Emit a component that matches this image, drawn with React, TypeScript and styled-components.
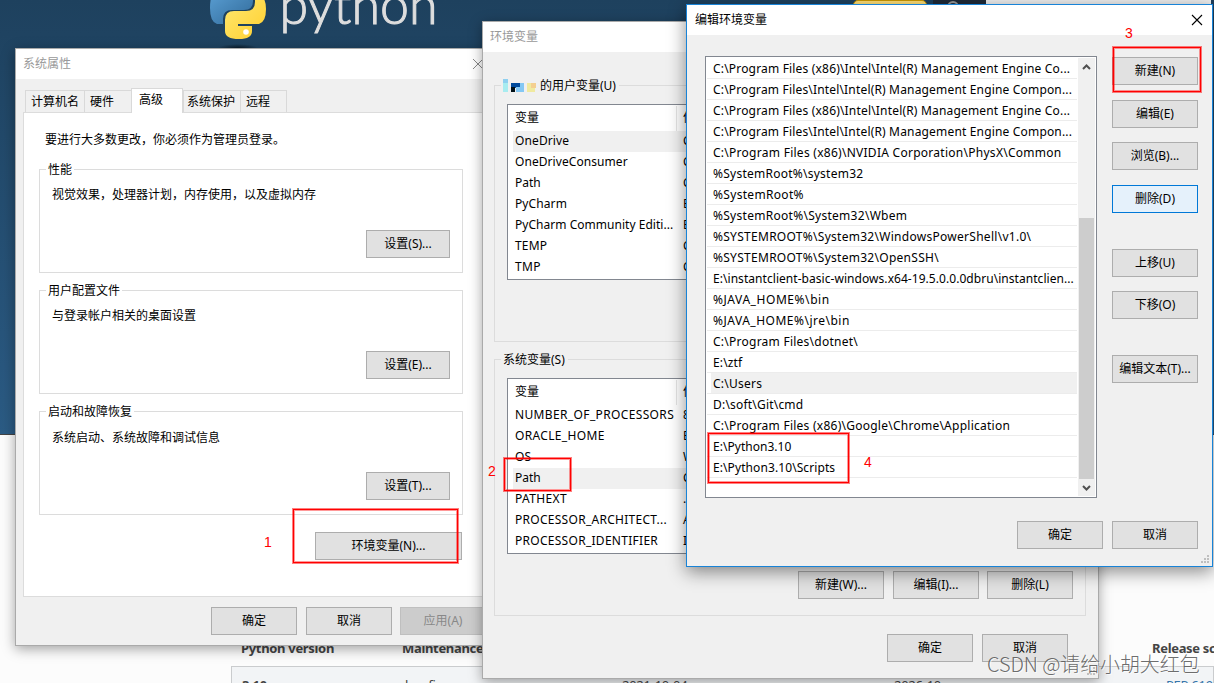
import React from "react";
import styled, { createGlobalStyle, css } from "styled-components";

const Global = createGlobalStyle`
  * { box-sizing: border-box; }
  body { margin: 0; overflow: hidden; }
`;

const ui = `"Noto Sans", "Noto Sans CJK SC", sans-serif`;

const Desktop = styled.main`
  position: relative;
  width: 1214px;
  height: 683px;
  overflow: hidden;
  background: #fcfcfc;
  font: 12px/16px ${ui};
  color: #000;
`;

/* Web page behind the dialogs */
const Banner = styled.header`
  height: 435px;
  padding-left: 200px;
  display: flex;
  align-items: flex-start;
  background: linear-gradient(#1e415e, #2b5b84);
  border-bottom: 1px solid #444;
`;
const NavStrip = styled.div`
  display: flex;
  width: 358px;
  height: 14px;
  margin-left: 403px;
`;
const Donate = styled.div`
  width: 74px;
  height: 14px;
  margin-right: 6px;
  border: 1px solid #c99700;
  border-radius: 5px;
  background: #ffdf76;
`;
const SearchIcon = styled.div`
  width: 53px;
  height: 14px;
  padding: 1px 0 0 14px;
  background: #1f2a38;
`;
const SearchField = styled.div`
  flex: 1;
  background: #eee;
`;
const Releases = styled.section`
  margin: 204px 0 0 231px;
`;
const ReleaseHead = styled.div`
  display: grid;
  grid-template-columns: 161px 220px 272px 258px 100px;
  height: 27px;
  padding-left: 10px;
  font: bold 13px/18px "Noto Sans", sans-serif;
  letter-spacing: -0.32px;
  color: #444;
  white-space: nowrap;
`;
const ReleaseRow = styled.div`
  display: grid;
  grid-template-columns: 163px 217px 272px 272px 100px;
  height: 40px;
  padding: 9px 0 0 10px;
  border: 1px solid #caccce;
  background: #f2f4f6;
  font: 13px/18px "Noto Sans", sans-serif;
  letter-spacing: -0.25px;
  color: #444;
  white-space: nowrap;
`;
const Version = styled.b``;
const PepLink = styled.span`
  color: #3776ab;
`;

/* Dialog chrome */
const Dialog = styled.section<{ $x: number; $y: number; $w: number; $h: number; $active?: boolean }>`
  position: absolute;
  left: ${(p) => p.$x}px;
  top: ${(p) => p.$y}px;
  width: ${(p) => p.$w}px;
  height: ${(p) => p.$h}px;
  display: flex;
  flex-direction: column;
  background: #f0f0f0;
  border: 1px solid ${(p) => (p.$active ? "#1883d7" : "#aaa")};
  box-shadow: ${(p) => (p.$active ? "0 5px 17px rgba(0,0,0,.45)" : "0 3px 12px rgba(0,0,0,.36)")};
`;
const TitleBar = styled.header<{ $active?: boolean }>`
  display: flex;
  justify-content: space-between;
  align-items: center;
  flex: none;
  height: 30px;
  padding: 0 9px 0 ${(p) => (p.$active ? 8 : 7)}px;
  background: #fff;
  color: ${(p) => (p.$active ? "#000" : "#999")};
`;
const Button = styled.button<{ $w?: number; $focus?: boolean; $gap?: number; $snug?: boolean }>`
  flex: none;
  width: ${(p) => p.$w ?? 86}px;
  height: 28px;
  margin: ${(p) => p.$gap ?? 0}px 0 0 ${(p) => (p.$snug ? -1 : 0)}px;
  padding: 0;
  border: 1px solid ${(p) => (p.$focus ? "#0078d7" : "#adadad")};
  background: ${(p) => (p.$focus ? "#e5f1fb" : "#e1e1e1")};
  color: #000;
  font: 12px/16px ${ui};
  &:disabled {
    border-color: #bfbfbf;
    background: #ccc;
    color: #888;
  }
`;
const Group = styled.fieldset`
  position: relative;
  margin: 0;
  padding: 0;
  min-width: 0;
  border: 1px solid #dcdcdc;
`;
const groupLabel = css`
  display: flex;
  align-items: center;
  width: max-content;
  height: 16px;
  white-space: nowrap;
`;

/* System properties */
const Tabs = styled.nav`
  display: flex;
  align-items: flex-end;
  flex: none;
  height: 33px;
  padding-left: 9px;
`;
const Tab = styled.div<{ $w: number; $on?: boolean; $inset?: number }>`
  position: relative;
  width: ${(p) => p.$w}px;
  height: ${(p) => (p.$on ? 25 : 22)}px;
  padding: 3px 0 0 ${(p) => p.$inset ?? 5}px;
  border: 1px solid #d9d9d9;
  border-bottom: 0;
  border-right-width: ${(p) => (p.$on ? 1 : 0)}px;
  background: ${(p) => (p.$on ? "#fff" : "#f0f0f0")};
  margin-bottom: ${(p) => (p.$on ? -1 : 0)}px;
  white-space: nowrap;
  &:last-child { border-right-width: 1px; }
`;
const TabPage = styled.div`
  display: flex;
  flex-direction: column;
  flex: none;
  width: 480px;
  height: 485px;
  margin-left: 7px;
  padding: 19px 0 0 15px;
  border: 1px solid #dcdcdc;
  background: #fff;
`;
const Hint = styled.p`
  margin: 0 0 13px 6px;
`;
const SettingGroup = styled(Group)`
  display: flex;
  flex-direction: column;
  width: 424px;
  height: 112px;
  margin-bottom: 9px;
  flex: none;
`;
const SettingLegend = styled.legend`
  ${groupLabel}
  margin-left: 6px;
  padding: 2px 2px 0;
`;
const SettingText = styled.p<{ $low?: boolean }>`
  margin: ${(p) => (p.$low ? "11px 0 26px 12px" : "10px 0 27px 12px")};
`;
const SettingAction = styled.div`
  display: flex;
  justify-content: flex-end;
  padding-right: 12px;
`;
const EnvAction = styled.div`
  display: flex;
  width: 423px;
  justify-content: flex-end;
  margin-top: 8px;
`;
const Footer = styled.footer<{ $top: number; $right: number }>`
  display: flex;
  justify-content: flex-end;
  gap: 9px;
  margin-top: ${(p) => p.$top}px;
  padding-right: ${(p) => p.$right}px;
`;

/* Environment variables */
const VarBody = styled.div`
  padding: 25px 0 0 11px;
`;
const VarGroup = styled(Group)`
  width: 592px;
  height: 265px;
  margin-bottom: 9px;
  padding: 11px 12px 0;
`;
const VarLegend = styled.legend`
  ${groupLabel}
  margin-left: -6px;
  padding: 2px 3px 0 2px;
`;
const VarTable = styled.div`
  width: 567px;
  height: 176px;
  padding: 1px 0 0 5px;
  border: 1px solid #828790;
  background: #fff;
`;
const VarHeader = styled.div`
  display: grid;
  grid-template-columns: 164px 1fr;
  height: 25px;
  line-height: 24px;
`;
const VarHeaderCell = styled.span<{ $last?: boolean }>`
  padding-left: ${(p) => (p.$last ? 6 : 2)}px;
  border-right: ${(p) => (p.$last ? 0 : 1)}px solid #e5e5e5;
`;
const VarRow = styled.div<{ $on?: boolean }>`
  display: grid;
  grid-template-columns: 168px 1fr;
  height: 21px;
  padding-left: 2px;
  line-height: 20px;
  background: ${(p) => (p.$on ? "#f0f0f0" : "#fff")};
  white-space: nowrap;
`;
const VarName = styled.span<{ $track?: number }>`
  letter-spacing: ${(p) => p.$track ?? 0.2}px;
`;
const VarActions = styled.div`
  display: flex;
  justify-content: flex-end;
  gap: 9px;
  margin-top: 17px;
`;

/* Edit dialog */
const EditBody = styled.div`
  display: flex;
  justify-content: space-between;
  padding: 21px 14px 0 18px;
`;
const PathList = styled.div`
  display: flex;
  width: 392px;
  height: 442px;
  padding: 1px;
  border: 1px solid #828790;
  background: #fff;
`;
const PathRows = styled.div`
  flex: 1;
  min-width: 0;
`;
const PathRow = styled.div<{ $on?: boolean; $track?: number }>`
  height: 21px;
  margin-right: 1px;
  padding-left: 6px;
  border-bottom: 1px solid #ececec;
  background: ${(p) => (p.$on ? "linear-gradient(90deg,#fff 4px,#f0f0f0 4px)" : "#fff")};
  line-height: 22px;
  letter-spacing: ${(p) => p.$track ?? 0.25}px;
  white-space: nowrap;
`;
const Scrollbar = styled.div`
  display: flex;
  flex-direction: column;
  justify-content: space-between;
  align-items: center;
  width: 17px;
  background: #f0f0f0;
`;
const ScrollThumb = styled.div`
  width: 15px;
  height: 261px;
  margin-top: 143px;
  background: #cdcdcd;
`;
const Commands = styled.div`
  display: flex;
  flex-direction: column;
  width: 86px;
  padding-top: 1px;
`;
const Grip = styled.svg`
  position: absolute;
  right: 2px;
  bottom: 2px;
`;

/* Annotations laid over the windows */
const Mark = styled.div<{ $x: number; $y: number; $w: number; $h: number }>`
  position: absolute;
  left: ${(p) => p.$x}px;
  top: ${(p) => p.$y}px;
  width: ${(p) => p.$w}px;
  height: ${(p) => p.$h}px;
  border: 1px solid #f00;
  outline: 1px solid rgba(255, 0, 0, 0.5);
  box-shadow: inset 0 0 0 1px rgba(255, 0, 0, 0.4);
`;
const Step = styled.span<{ $x: number; $y: number }>`
  position: absolute;
  left: ${(p) => p.$x}px;
  top: ${(p) => p.$y}px;
  font: 14px/16px "Liberation Sans", sans-serif;
  color: #f00;
`;
const Watermark = styled.div`
  position: absolute;
  left: 987px;
  top: 650px;
  font: 300 20px/28px "Noto Sans CJK SC", sans-serif;
  letter-spacing: -0.1px;
  color: rgba(90, 90, 90, 0.9);
  text-shadow: 1px 1px 0 rgba(255, 255, 255, 0.7);
  white-space: nowrap;
`;

const Close = ({ color }: { color: string }) => (
  <svg width="12" height="12" viewBox="0 0 12 12" stroke={color} strokeWidth="1.1">
    <path d="M1 1 11 11M11 1 1 11" />
  </svg>
);

const Dots = () => (
  <Grip width="9" height="9" fill="#bfbfbf">
    <path d="M6 0h2v2h-2zM3 3h2v2h-2zM6 3h2v2h-2zM0 6h2v2h-2zM3 6h2v2h-2zM6 6h2v2h-2z" />
  </Grip>
);

const Logo = () => (
  <svg width="250" height="48" viewBox="200 0 250 48">
    <defs>
      <linearGradient id="blue" x1="0" y1="0" x2="1" y2="1">
        <stop offset="0" stopColor="#5a9fd4" />
        <stop offset="1" stopColor="#306998" />
      </linearGradient>
      <linearGradient id="gold" x1="0" y1="0" x2="1" y2="1">
        <stop offset="0" stopColor="#ffe873" />
        <stop offset="1" stopColor="#ffd02f" />
      </linearGradient>
      <radialGradient id="shade">
        <stop offset="0" stopColor="#0b1d2c" />
        <stop offset="1" stopColor="#0b1d2c" stopOpacity="0" />
      </radialGradient>
    </defs>
    <ellipse cx="238" cy="48" rx="20" ry="4" fill="url(#shade)" />
    <path d="M214 -8H253V1Q253 10 244 10H232Q223 10 223 19V24H217Q210 22 210 8Q210 -4 214 -8Z" fill="url(#blue)" />
    <path d="M255 -5H259Q266 -3 266 9Q266 22 259 24H238V26H252V31Q252 39 239 39Q225 39 225 31V20Q225 11 234 11H246Q255 11 255 2Z" fill="url(#gold)" />
    <circle cx="246" cy="32" r="2.8" fill="#fff" />
    <text x="279.500" y="23.500" fontFamily="Lato, sans-serif" fontSize="54" fontWeight="300" fill="#dedede" stroke="#dedede" strokeWidth="1.1" textLength="158" lengthAdjust="spacingAndGlyphs">python</text>
  </svg>
);

type Variable = [name: string, value: string, track?: number];
const userVars: Variable[] = [
  ["OneDrive", "C", 0.12],
  ["OneDriveConsumer", "C", 0.07],
  ["Path", "C", 0],
  ["PyCharm", "E", 0.1],
  ["PyCharm Community Editi...", "E", 0.03],
  ["TEMP", "C"],
  ["TMP", "C", 0.4],
];
const systemVars: Variable[] = [
  ["NUMBER_OF_PROCESSORS", "8", 0.36],
  ["ORACLE_HOME", "E", 0.34],
  ["OS", "W"],
  ["Path", "C", 0],
  ["PATHEXT", ".", 0.36],
  ["PROCESSOR_ARCHITECT...", "A", 0.28],
  ["PROCESSOR_IDENTIFIER", "I", 0.28],
];
const paths: [path: string, track?: number][] = [
  ["C:\\Program Files (x86)\\Intel\\Intel(R) Management Engine Co...", 0.18],
  ["C:\\Program Files\\Intel\\Intel(R) Management Engine Compon...", 0.17],
  ["C:\\Program Files (x86)\\Intel\\Intel(R) Management Engine Co...", 0.18],
  ["C:\\Program Files\\Intel\\Intel(R) Management Engine Compon...", 0.17],
  ["C:\\Program Files (x86)\\NVIDIA Corporation\\PhysX\\Common", 0.27],
  ["%SystemRoot%\\system32"],
  ["%SystemRoot%", 0.32],
  ["%SystemRoot%\\System32\\Wbem", 0.28],
  ["%SYSTEMROOT%\\System32\\WindowsPowerShell\\v1.0\\", 0.28],
  ["%SYSTEMROOT%\\System32\\OpenSSH\\", 0.28],
  ["E:\\instantclient-basic-windows.x64-19.5.0.0.0dbru\\instantclien...", 0.05],
  ["%JAVA_HOME%\\bin", 0.56],
  ["%JAVA_HOME%\\jre\\bin", 0.5],
  ["C:\\Program Files\\dotnet\\"],
  ["E:\\ztf", 0.15],
  ["C:\\Users"],
  ["D:\\soft\\Git\\cmd", 0.2],
  ["C:\\Program Files (x86)\\Google\\Chrome\\Application"],
  ["E:\\Python3.10", 0.03],
  ["E:\\Python3.10\\Scripts", 0.09],
];
const settings = [
  ["性能", "视觉效果，处理器计划，内存使用，以及虚拟内存", "设置(S)..."],
  ["用户配置文件", "与登录帐户相关的桌面设置", "设置(E)..."],
  ["启动和故障恢复", "系统启动、系统故障和调试信息", "设置(T)..."],
];

const Variables = ({ rows, selected }: { rows: Variable[]; selected: number }) => (
  <VarTable>
    <VarHeader>
      <VarHeaderCell>变量</VarHeaderCell>
      <VarHeaderCell $last>值</VarHeaderCell>
    </VarHeader>
    {rows.map(([name, value, track], i) => (
      <VarRow key={name} $on={i === selected}>
        <VarName $track={track}>{name}</VarName>
        <span>{value}</span>
      </VarRow>
    ))}
  </VarTable>
);

export default function App() {
  return (
    <Desktop>
      <Global />
      <Banner>
        <Logo />
        <NavStrip>
          <Donate />
          <SearchIcon>
            <svg width="13" height="13" fill="none" stroke="#999" strokeWidth="2"><circle cx="6" cy="6" r="5" /></svg>
          </SearchIcon>
          <SearchField />
        </NavStrip>
      </Banner>
      <Releases>
        <ReleaseHead>
          <span>Python version</span>
          <span>Maintenance status</span>
          <span>First released</span>
          <span>End of support</span>
          <span>Release schedule</span>
        </ReleaseHead>
        <ReleaseRow>
          <Version>3.10</Version>
          <span>bugfix</span>
          <span>2021-10-04</span>
          <span>2026-10</span>
          <PepLink>PEP 619</PepLink>
        </ReleaseRow>
      </Releases>

      <Dialog $x={15} $y={48} $w={482} $h={598}>
        <TitleBar>
          系统属性
          <svg width="15" height="12" viewBox="0 0 15 12" stroke="#888"><path d="M1 1 11 11M11 1 1 11" /></svg>
        </TitleBar>
        <Tabs>
          <Tab $w={59}>计算机名</Tab>
          <Tab $w={47}>硬件</Tab>
          <Tab $w={52} $on $inset={7}>高级</Tab>
          <Tab $w={57} $inset={3}>系统保护</Tab>
          <Tab $w={47}>远程</Tab>
        </Tabs>
        <TabPage>
          <Hint>要进行大多数更改，你必须作为管理员登录。</Hint>
          {settings.map(([name, text, action], i) => (
            <SettingGroup key={name}>
              <SettingLegend>{name}</SettingLegend>
              <SettingText $low={i === 2}>{text}</SettingText>
              <SettingAction><Button $w={84}>{action}</Button></SettingAction>
            </SettingGroup>
          ))}
          <EnvAction><Button $w={147}>环境变量(N)...</Button></EnvAction>
        </TabPage>
        <Footer $top={10} $right={10}>
          <Button>确定</Button>
          <Button>取消</Button>
          <Button disabled $snug>应用(A)</Button>
        </Footer>
      </Dialog>

      <Dialog $x={482} $y={21} $w={617} $h={658}>
        <TitleBar>环境变量</TitleBar>
        <VarBody>
          <VarGroup>
            <VarLegend>
              <svg width="37" height="14" viewBox="0 0 37 14">
                <path fill="#a8ecf0" d="M0 0h5v13H0z" /><path fill="#8fd0f0" d="M0 0h5v4H0z" />
                <path fill="#004a9c" d="M8 4h9v5H8z" /><path fill="#001018" d="M8 8h4v5H8z" />
                <path fill="#84c8f4" d="M13 8h8v5h-8zM17 4h4v5h-4z" />
                <path fill="#f0eaa0" d="M24 4h8v9h-8z" /><path fill="#f4cf90" d="M28 4h5v5h-5z" />
              </svg>
              的用户变量(U)
            </VarLegend>
            <Variables rows={userVars} selected={0} />
          </VarGroup>
          <VarGroup>
            <VarLegend>系统变量(S)</VarLegend>
            <Variables rows={systemVars} selected={3} />
            <VarActions>
              <Button>新建(W)...</Button>
              <Button>编辑(I)...</Button>
              <Button $snug>删除(L)</Button>
            </VarActions>
          </VarGroup>
        </VarBody>
        <Footer $top={9} $right={30}>
          <Button>确定</Button>
          <Button>取消</Button>
        </Footer>
        <Dots />
      </Dialog>

      <Dialog $x={686} $y={4} $w={527} $h={563} $active>
        <TitleBar $active>
          编辑环境变量
          <Close color="#000" />
        </TitleBar>
        <EditBody>
          <PathList>
            <PathRows>
              {paths.map(([path, track], i) => (
                <PathRow key={i} $on={i === 15} $track={track}>{path}</PathRow>
              ))}
            </PathRows>
            <Scrollbar>
              <svg width="17" height="17" fill="none" stroke="#505050" strokeWidth="2"><path d="M5 11 8.500 7.500 12 11" /></svg>
              <ScrollThumb />
              <svg width="17" height="17" fill="none" stroke="#505050" strokeWidth="2"><path d="M5 7 8.500 10.500 12 7" /></svg>
            </Scrollbar>
          </PathList>
          <Commands>
            <Button>新建(N)</Button>
            <Button $gap={15}>编辑(E)</Button>
            <Button $gap={14}>浏览(B)...</Button>
            <Button $gap={15} $focus>删除(D)</Button>
            <Button $gap={36}>上移(U)</Button>
            <Button $gap={14}>下移(O)</Button>
            <Button $gap={36}>编辑文本(T)...</Button>
          </Commands>
        </EditBody>
        <Footer $top={23} $right={14}>
          <Button>确定</Button>
          <Button>取消</Button>
        </Footer>
        <Dots />
      </Dialog>

      <Mark $x={293} $y={509} $w={165} $h={54} />
      <Mark $x={504} $y={458} $w={67} $h={33} />
      <Mark $x={1113} $y={47} $w={88} $h={45} />
      <Mark $x={708} $y={433} $w={141} $h={50} />
      <Step $x={264} $y={534}>1</Step>
      <Step $x={488} $y={463}>2</Step>
      <Step $x={1125} $y={25}>3</Step>
      <Step $x={864} $y={454}>4</Step>
      <Watermark>CSDN @请给小胡大红包</Watermark>
    </Desktop>
  );
}
